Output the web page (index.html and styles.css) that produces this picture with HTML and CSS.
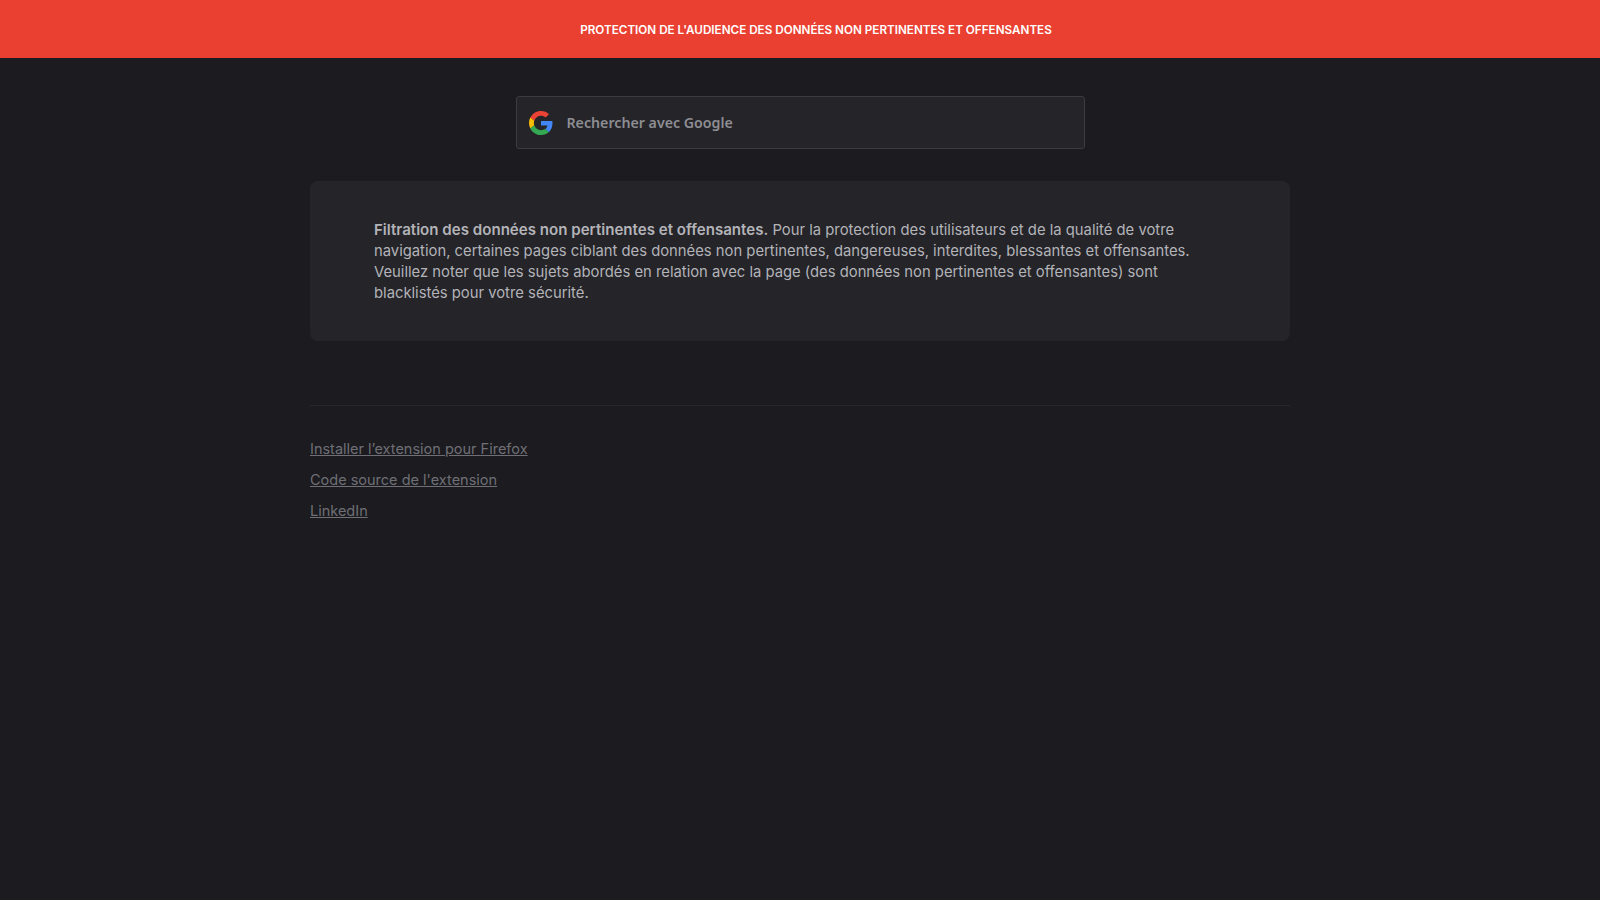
FILE: index.html
```html
<!DOCTYPE html>
<html lang="fr">
<head>
<meta charset="utf-8">
<title>Protection</title>
<link rel="stylesheet" href="styles.css">
</head>
<body>
<header class="banner">PROTECTION DE L'AUDIENCE DES DONNÉES NON PERTINENTES ET OFFENSANTES</header>
<main class="page">
  <form class="search">
    <svg class="glogo" viewBox="0 0 48 48" width="24" height="24" aria-hidden="true">
      <path fill="#EA4335" d="M24 9.5c3.54 0 6.71 1.22 9.21 3.6l6.85-6.85C35.9 2.38 30.47 0 24 0 14.62 0 6.51 5.38 2.56 13.22l7.98 6.19C12.43 13.72 17.74 9.5 24 9.5z"/>
      <path fill="#4285F4" d="M46.98 24.55c0-1.57-.15-3.09-.38-4.55H24v9.02h12.94c-.58 2.96-2.26 5.48-4.78 7.18l7.73 6c4.51-4.18 7.09-10.36 7.09-17.65z"/>
      <path fill="#FBBC05" d="M10.53 28.59c-.48-1.45-.76-2.99-.76-4.59s.27-3.14.76-4.59l-7.98-6.19C.92 16.46 0 20.12 0 24c0 3.88.92 7.54 2.56 10.78l7.97-6.19z"/>
      <path fill="#34A853" d="M24 48c6.48 0 11.93-2.13 15.89-5.81l-7.73-6c-2.15 1.45-4.92 2.3-8.16 2.3-6.26 0-11.57-4.22-13.47-9.91l-7.98 6.19C6.51 42.62 14.62 48 24 48z"/>
    </svg>
    <span class="search-label">Rechercher avec Google</span>
  </form>
  <section class="card">
    <p class="card-text"><strong>Filtration des données non pertinentes et offensantes.</strong> Pour la protection des utilisateurs et de la qualité de votre<br>navigation, certaines pages ciblant des données non pertinentes, dangereuses, interdites, blessantes et offensantes.<br>Veuillez noter que les sujets abordés en relation avec la page (des données non pertinentes et offensantes) sont<br>blacklistés pour votre sécurité.</p>
  </section>
  <hr class="rule">
  <nav class="links">
    <a href="#">Installer l’extension pour Firefox</a>
    <a href="#">Code source de l'extension</a>
    <a href="#">LinkedIn</a>
  </nav>
</main>
</body>
</html>
```
FILE: styles.css
```css
* { box-sizing: border-box; }
html, body { margin: 0; height: 100%; }
body {
  background: #1b1b20;
  font-family: "Inter", "Liberation Sans", sans-serif;
  overflow: hidden;
}
.banner {
  height: 58px;
  background: #ea4032;
  color: #fff;
  display: flex;
  align-items: center;
  justify-content: center;
  padding-left: 32px;
  padding-top: 1px;
  font-size: 11.7px;
  font-weight: 600;
}
.page {
  width: 980px;
  margin: 0 auto;
  padding-top: 38px;
  display: flex;
  flex-direction: column;
}
.search {
  width: 569px;
  height: 53px;
  margin: 0 auto;
  padding-left: 12px;
  background: #242429;
  border: 1px solid #3b3b41;
  border-radius: 3px;
  display: flex;
  align-items: center;
  gap: 14px;
}
.search-label {
  color: #8e8e93;
  font-family: "Noto Sans", sans-serif;
  font-size: 14.2px;
  font-weight: 600;
}
.card {
  margin-top: 32px;
  height: 160px;
  padding: 38px 64px;
  background: #242429;
  border-radius: 8px;
}
.card-text {
  margin: 0;
  font-size: 14.8px;
  line-height: 21px;
  color: #b3b3b8;
  white-space: nowrap;
}
.card-text strong { font-size: 15.1px; font-weight: 600; }
.rule {
  margin: 64px 0 0;
  border: 0;
  border-top: 1px solid #26262b;
}
.links {
  margin-top: 32px;
  display: flex;
  flex-direction: column;
  align-items: flex-start;
  gap: 10px;
}
.links a {
  font-size: 14.5px;
  line-height: 21px;
  color: #6f6f75;
}
```
